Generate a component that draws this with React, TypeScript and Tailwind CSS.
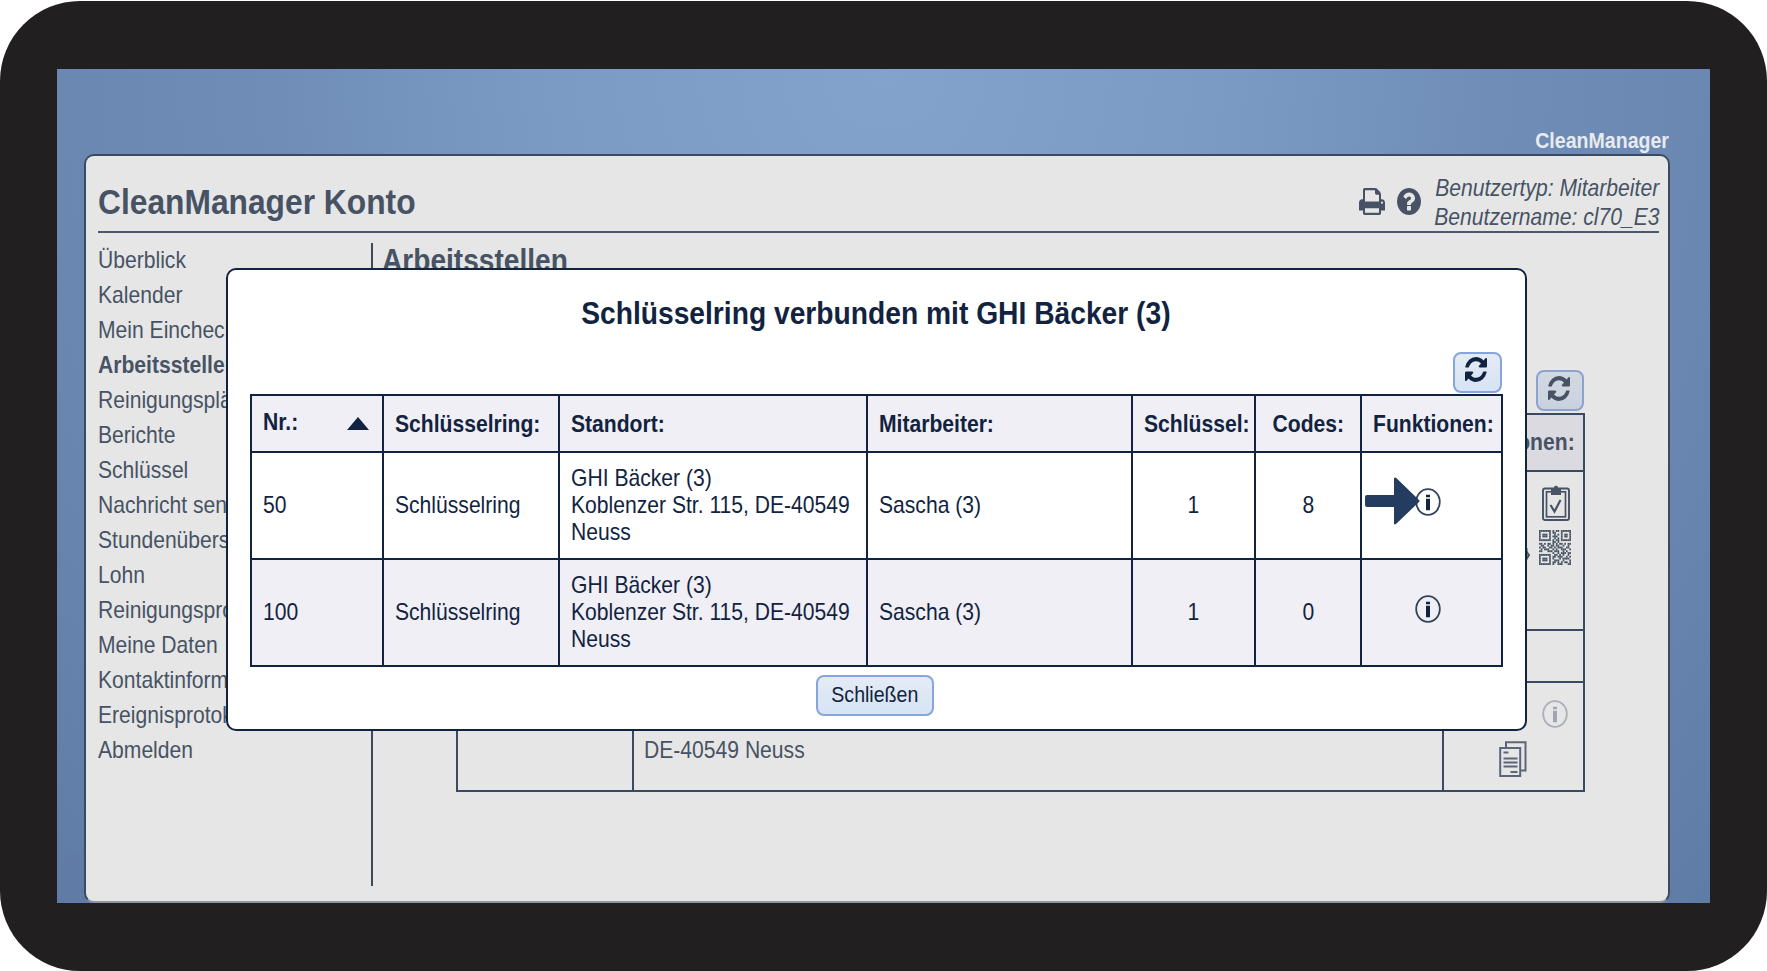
import clsx from "clsx"
import type { ReactNode } from "react"

const menuItems = [
  "Überblick",
  "Kalender",
  "Mein Eincheckprofil",
  "Arbeitsstellen",
  "Reinigungspläne",
  "Berichte",
  "Schlüssel",
  "Nachricht senden",
  "Stundenübersicht",
  "Lohn",
  "Reinigungsprotokoll",
  "Meine Daten",
  "Kontaktinformationen",
  "Ereignisprotokoll",
  "Abmelden",
]

const keyRings = [
  { nr: "50", keys: "1", codes: "8", pointed: true },
  { nr: "100", keys: "1", codes: "0", pointed: false },
]

// Slightly condensed text
function T({ children, origin = "origin-left", className }: { children: ReactNode; origin?: string; className?: string }) {
  return <span className={clsx("inline-block scale-x-[0.91] whitespace-nowrap", origin, className)}>{children}</span>
}

function PrintIcon({ className }: { className?: string }) {
  return (
    <svg viewBox="0 128 1664 1536" preserveAspectRatio="none" fill="currentColor" className={className}>
      <path d="M384 1536h896v-256h-896v256zM384 896h896v-384h-160q-40 0-68-28t-28-68v-160h-640v640zM1536 960q0-26-19-45t-45-19-45 19-19 45 19 45 45 19 45-19 19-45zM1664 960v416q0 13-9.500 22.500t-22.500 9.500h-224v160q0 40-28 68t-68 28h-960q-40 0-68-28t-28-68v-160h-224q-13 0-22.500-9.500t-9.500-22.500v-416q0-79 56.500-135.500t135.500-56.500h64v-544q0-40 28-68t68-28h672q40 0 88 20t76 48l152 152q28 28 48 76t20 88v256h64q79 0 135.500 56.500t56.500 135.500z" />
    </svg>
  )
}

function HelpIcon({ className }: { className?: string }) {
  return (
    <svg viewBox="128 128 1536 1536" preserveAspectRatio="none" fill="currentColor" className={className}>
      <path d="M1024 1376v-192q0-14-9-23t-23-9h-192q-14 0-23 9t-9 23v192q0 14 9 23t23 9h192q14 0 23-9t9-23zM1280 704q0-88-55.500-163t-138.500-116-170-41q-243 0-371 213-15 24 8 42l132 100q7 6 19 6 16 0 25-12 53-68 86-92 34-24 86-24 48 0 85.500 26t37.500 59q0 38-20 61t-68 45q-63 28-115.500 86.500t-52.500 125.500v36q0 14 9 23t23 9h192q14 0 23-9t9-23q0-19 21.500-49.500t54.500-49.500q32-18 49-28.500t46-35 44.500-48 28-60.500 12.500-81zM1664 896q0 209-103 385.500t-279.500 279.500-385.500 103-385.500-103-279.500-279.500-103-385.500 103-385.500 279.500-279.500 385.500-103 385.500 103 279.500 279.500 103 385.500z" />
    </svg>
  )
}

function RefreshIcon({ className }: { className?: string }) {
  return (
    <svg viewBox="128 128 1536 1536" preserveAspectRatio="none" fill="currentColor" className={className}>
      <path d="M1639 1056q0 5-1 7-64 268-268 434.500t-478 166.500q-146 0-282.500-55t-243.500-157l-129 129q-19 19-45 19t-45-19-19-45v-448q0-26 19-45t45-19h448q26 0 45 19t19 45-19 45l-137 137q71 66 161 102t187 36q134 0 250-65t186-179q11-17 53-117 8-23 30-23h192q13 0 22.500 9.500t9.500 22.500zM1664 256v448q0 26-19 45t-45 19h-448q-26 0-45-19t-19-45 19-45l138-138q-148-137-349-137-134 0-250 65t-186 179q-11 17-53 117-8 23-30 23h-199q-13 0-22.500-9.500t-9.500-22.500v-7q65-268 270-434.500t480-166.500q146 0 284 55.500t245 156.500l130-129q19-19 45-19t45 19 19 45z" />
    </svg>
  )
}

function InfoIcon({ className }: { className?: string }) {
  return (
    <svg viewBox="0 0 26 28" fill="none" className={clsx("h-7 w-[26px]", className)}>
      <ellipse cx="13" cy="14" rx="11.8" ry="12.8" stroke="currentColor" strokeOpacity="0.85" strokeWidth="1.8" />
      <path d="M11 6.8h4v2.4h-4zM11 10.800h4v11.500h-4z" fill="currentColor" />
    </svg>
  )
}

function ClipboardIcon() {
  return (
    <svg viewBox="0 0 28 36" fill="none" stroke="currentColor" className="h-9 w-7">
      <rect x="1" y="3.500" width="26" height="31.500" rx="2" strokeWidth="1.900" />
      <rect x="4.500" y="6.800" width="19" height="25" strokeWidth="1.700" />
      <path d="M9 10V3.500h3V1.800q2-2 4 0v1.700h3V10z" fill="currentColor" stroke="none" />
      <path d="M8.500 20l4 6.500L18.500 15" strokeWidth="2.200" />
    </svg>
  )
}

const qrRows = [
  "1111111010110111111",
  "1000001011000100001",
  "1011101001010101101",
  "1011101011100101101",
  "1000001001010100001",
  "1111111010110111111",
  "0000000011010000000",
  "1101011010101101011",
  "0110010110110010010",
  "1011001101011100110",
  "0101110010100111001",
  "1100011101110010100",
  "0000000010010111011",
  "1111111001101010010",
  "1000001011011100101",
  "1011101010001011110",
  "1011101001110010001",
  "1000001011010101101",
  "1111111010011100011",
]

function QrIcon() {
  return (
    <svg viewBox="0 0 19 19" preserveAspectRatio="none" fill="currentColor" className="h-[35px] w-8">
      {qrRows.map((row, y) =>
        row.split("").map((c, x) => (c === "1" ? <rect key={`${x}-${y}`} x={x} y={y} width="1.02" height="1.02" /> : null)),
      )}
    </svg>
  )
}

function BellIcon() {
  return (
    <svg viewBox="0 0 24 26" fill="none" stroke="currentColor" strokeWidth="2" className="h-[26px] w-6">
      <path d="M14 2q6 2 6 9v5l3 4-3 5" />
      <path d="M4 20V10q0-6 8-8M20.500 13v10" />
    </svg>
  )
}

function CopyIcon() {
  return (
    <svg viewBox="0 0 28 36" fill="none" stroke="currentColor" strokeWidth="2" className="h-9 w-7">
      <path d="M7 7V1.200h19.500v28.300h-5" />
      <rect x="1.200" y="7" width="20" height="28" />
      <path d="M4.500 11.500h5M4.500 17.500h14M4.500 21.500h14M4.500 25.500h14M11.500 31h7" />
    </svg>
  )
}

const border = "border-2 border-[#12233f]"
const th = "border-2 border-[#12233f] bg-[#f0eff5] pl-[11px] pt-0.5 text-left font-bold"
const td = "border-2 border-[#12233f] pl-[11px]"
const bgBorder = "border-2 border-[#3a4a60]"

export default function App() {
  return (
    <div className="h-[971px] w-[1767px] overflow-hidden bg-white pt-px font-['Liberation_Sans',Arial,sans-serif] text-[23.2px] leading-[27px] text-[#12233f]">
      <div className="h-[970px] rounded-[80px] bg-[#221f20] pl-[57px] pt-[68px]">
        <div className="relative h-[834px] w-[1653px] overflow-hidden bg-[#6c8ab4] bg-[radial-gradient(ellipse_at_50%_0%,#83a3cd_0%,#7b9bc5_28%,#6f8db7_52%,#6986b1_75%,#5f7ca6_100%)] pl-[27px]">
          <div className="absolute bottom-0 left-0 h-14 w-7 bg-[#607ca6] [clip-path:polygon(0_32%,100%_0,100%_100%,0_100%)]" />
          <div className="relative flex h-[85px] w-[1585px] items-end justify-end text-[21.5px] font-bold leading-[25px] text-[#e8eaee]">
            <T origin="origin-right">CleanManager</T>
          </div>

          {/* Account page behind the dialog */}
          <div className="relative h-[749px] w-[1586px] rounded-[10px] border-2 border-[#3c4a60] border-b-[#8f969f] bg-[#e6e6e6] pl-3 text-[#475364]">
            <header className="flex h-[77px] w-[1561px] items-end justify-between border-b-2 border-[#4a596d]">
              <h1 className="pb-[10px] text-[34.9px] font-bold leading-[38px]">
                <T>CleanManager Konto</T>
              </h1>
              <div className="flex items-center">
                <PrintIcon className="mb-[3px] mr-3 h-[27px] w-[26px]" />
                <HelpIcon className="mb-[3px] mr-3 h-[27px] w-6" />
                <div className="-mb-px w-[226px] italic leading-[29px]">
                  <div className="flex justify-end"><T origin="origin-right">Benutzertyp: Mitarbeiter</T></div>
                  <div className="flex justify-end"><T origin="origin-right">Benutzername: cl70_E3</T></div>
                </div>
              </div>
            </header>

            <div className="flex pt-[10px]">
              <nav className="h-[643px] w-[275px] border-r-2 border-[#3c4a60]">
                <ul className="flex flex-col">
                  {menuItems.map((item) => (
                    <li key={item} className={clsx("h-[35px] leading-[35px]", item === "Arbeitsstellen" && "font-bold")}>
                      <T>{item}</T>
                    </li>
                  ))}
                </ul>
              </nav>

              <main className="w-[1211px] pl-[9px]">
                <h2 className="pt-px text-[30.9px] font-bold leading-[34px]">
                  <T>Arbeitsstellen</T>
                </h2>
                <div className="mt-[92px] flex justify-end">
                  <button className="flex h-[41px] w-12 justify-center rounded-[8px] border-2 border-[#8ba3cf] bg-linear-to-b from-[#d3d9e2] to-[#c8d2df] pr-0.5 pt-1">
                    <RefreshIcon className="h-[25px] w-[22px]" />
                  </button>
                </div>
                <table className="ml-[74px] mt-0.5 w-[1129px] table-fixed border-collapse">
                  <colgroup>
                    <col className="w-[176px]" />
                    <col />
                    <col className="w-[141px]" />
                  </colgroup>
                  <tbody>
                    <tr className="h-[57px] bg-[#dbdae0]">
                      <th className={bgBorder} />
                      <th className={bgBorder} />
                      <th className={bgBorder}>
                        <div className="flex justify-end pr-2">
                          <T origin="origin-right">Funktionen:</T>
                        </div>
                      </th>
                    </tr>
                    <tr className="h-[159px]">
                      <td className={bgBorder} />
                      <td className={bgBorder} />
                      <td className={clsx(bgBorder, "align-top")}>
                        <div className="flex flex-col items-end gap-[9px] pr-3 pt-[13px]">
                          <div className="pr-px"><ClipboardIcon /></div>
                          <div className="flex items-center gap-[9px]">
                            <BellIcon />
                            <QrIcon />
                          </div>
                        </div>
                      </td>
                    </tr>
                    <tr className="h-[52px]">
                      <td className={bgBorder} />
                      <td className={bgBorder} />
                      <td className={bgBorder} />
                    </tr>
                    <tr className="h-[109px]">
                      <td className={bgBorder} />
                      <td className={clsx(bgBorder, "pb-[26px] pl-[10px] align-bottom")}>
                        <T>DE-40549 Neuss</T>
                      </td>
                      <td className={clsx(bgBorder, "align-top")}>
                        <div className="flex flex-col pt-[17px]">
                          <InfoIcon className="ml-[98px] text-[#a0a5b0]" />
                          <div className="ml-[55px] mt-[13px] text-[#5c6579]"><CopyIcon /></div>
                        </div>
                      </td>
                    </tr>
                  </tbody>
                </table>
              </main>
            </div>
          </div>

          {/* Key ring dialog */}
          <section className="absolute left-[169px] top-[199px] h-[463px] w-[1301px] rounded-[10px] border-2 border-[#12233f] bg-white px-[22px]">
            <h2 className="flex justify-center pr-px pt-[27px] text-[31px] font-bold leading-[34px]">
              <T origin="origin-center">Schlüsselring verbunden mit GHI Bäcker (3)</T>
            </h2>
            <div className="mt-[21px] flex justify-end pr-px">
              <button className="flex h-[41px] w-[49px] justify-center rounded-[8px] border-2 border-[#86a5dd] bg-linear-to-b from-[#e4ebf5] to-[#d6e4f4] pr-[3px] pt-[3px]">
                <RefreshIcon className="h-[25px] w-[22px]" />
              </button>
            </div>

            <table className="mt-px w-[1252px] table-fixed border-collapse">
              <colgroup>
                <col className="w-[132px]" />
                <col className="w-[176px]" />
                <col className="w-[308px]" />
                <col className="w-[265px]" />
                <col className="w-[123px]" />
                <col className="w-[106px]" />
                <col className="w-[141px]" />
              </colgroup>
              <thead>
                <tr className="h-[57px]">
                  <th className={th}>
                    <div className="flex items-center justify-between pb-1 pr-[13px]">
                      <T>Nr.:</T>
                      <svg viewBox="0 0 22 13" fill="currentColor" className="mt-0.5 h-[13px] w-[22px]">
                        <path d="M11 0l11 13H0z" />
                      </svg>
                    </div>
                  </th>
                  <th className={th}><T>Schlüsselring:</T></th>
                  <th className={th}><T>Standort:</T></th>
                  <th className={th}><T>Mitarbeiter:</T></th>
                  <th className={th}><T>Schlüssel:</T></th>
                  <th className={clsx(border, "bg-[#f0eff5] pt-0.5 text-center font-bold")}><T origin="origin-center">Codes:</T></th>
                  <th className={th}><T>Funktionen:</T></th>
                </tr>
              </thead>
              <tbody>
                {keyRings.map((ring) => (
                  <tr key={ring.nr} className="h-[107px] even:bg-[#f0eff5]">
                    <td className={td}><T>{ring.nr}</T></td>
                    <td className={td}><T>Schlüsselring</T></td>
                    <td className={td}>
                      <T>
                        GHI Bäcker (3)
                        <br />
                        Koblenzer Str. 115, DE-40549
                        <br />
                        Neuss
                      </T>
                    </td>
                    <td className={td}><T>Sascha (3)</T></td>
                    <td className={clsx(border, "text-center")}><T origin="origin-center">{ring.keys}</T></td>
                    <td className={clsx(border, "text-center")}><T origin="origin-center">{ring.codes}</T></td>
                    <td className={border}>
                      <div className="relative flex justify-center pb-[7px] pr-[7px]">
                        <InfoIcon />
                        {ring.pointed && (
                          <svg viewBox="0 0 55 48" fill="#243c60" className="absolute left-[3px] top-[-11px] h-12 w-[55px]">
                            <path d="M2 18h27V1.500Q29.500 0 31 0.800L54 23Q55 24 54 25L31 47Q29.500 48 29 46.500V30H2Q0 30 0 28V20Q0 18 2 18z" />
                          </svg>
                        )}
                      </div>
                    </td>
                  </tr>
                ))}
              </tbody>
            </table>

            <div className="flex justify-center pr-1 pt-2">
              <button className="flex h-[41px] w-[118px] items-center justify-center rounded-[8px] border-2 border-[#86a5dd] bg-linear-to-b from-[#e4ebf5] to-[#d6e4f4] text-[21.5px]">
                <T origin="origin-center">Schließen</T>
              </button>
            </div>
          </section>
        </div>
      </div>
    </div>
  )
}
